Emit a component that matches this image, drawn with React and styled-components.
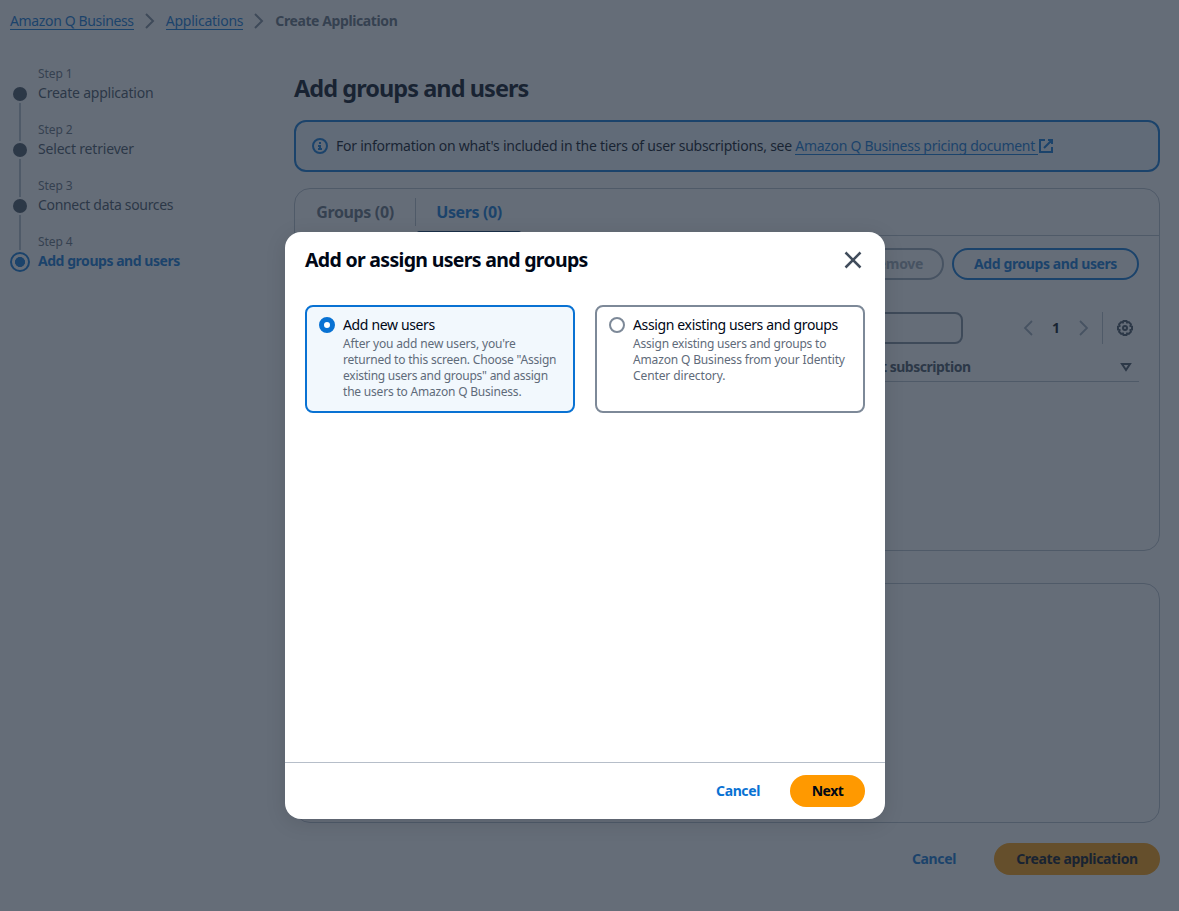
import React from "react";
import styled, { createGlobalStyle } from "styled-components";

const Global = createGlobalStyle`
  * { box-sizing: border-box; }
  html, body { margin: 0; padding: 0; }
  body {
    font-family: "Noto Sans", "Open Sans", sans-serif;
    font-size: 14px;
    line-height: 20px;
    color: #000716;
    background: #fff;
    overflow: hidden;
  }
  h1, h2, p, ol { margin: 0; padding: 0; }
`;

const T = styled.span`
  white-space: nowrap;
  letter-spacing: ${(p) => p.$ls || 0}px;
`;

const Page = styled.div`
  height: 911px;
  width: 1179px;
  display: flex;
  flex-direction: column;
`;

const Breadcrumbs = styled.nav`
  display: flex;
  align-items: center;
  gap: 8px;
  height: 42px;
  padding-left: 10px;
  color: #5f6b7a;
  font-weight: 700;
`;

const Link = styled.a`
  color: #0972d3;
  font-weight: 400;
  white-space: nowrap;
  line-height: 16px;
  border-bottom: 1px solid #0972d3;
  letter-spacing: ${(p) => p.$ls || 0}px;
`;

const Icon = styled.svg`
  width: ${(p) => p.$size || 16}px;
  height: ${(p) => p.$size || 16}px;
  flex: none;
  fill: none;
  stroke: ${(p) => p.$color || "currentColor"};
  stroke-width: ${(p) => p.$weight || 2};
`;

const Body = styled.div`
  display: flex;
  flex: 1;
`;

const Steps = styled.ol`
  width: 294px;
  padding: 24px 0 0 10px;
  list-style: none;
`;

const Step = styled.li`
  display: flex;
  gap: 8px;
  height: 56px;
`;

const Rail = styled.div`
  width: 20px;
  display: flex;
  flex-direction: column;
  align-items: center;
  padding-top: 21px;
`;

const Dot = styled.i`
  flex: none;
  width: 14px;
  height: 14px;
  border-radius: 50%;
  background: #414d5c;
`;

const ActiveDot = styled.i`
  flex: none;
  width: 20px;
  height: 20px;
  margin-top: -3px;
  border-radius: 50%;
  border: 2px solid #0972d3;
  background: radial-gradient(circle, #0972d3 4.7px, transparent 5.3px);
`;

const Connector = styled.i`
  flex: none;
  width: 2px;
  height: ${(p) => (p.$short ? 35 : 38)}px;
  margin-top: 2px;
  background: #b6bec9;
`;

const StepText = styled.div`
  display: flex;
  flex-direction: column;
  color: ${(p) => (p.$active ? "#0972d3" : "#414d5c")};
  font-weight: ${(p) => (p.$active ? 700 : 400)};
`;

const StepNumber = styled.small`
  font-size: 12px;
  line-height: 16px;
  margin-bottom: 1px;
  color: #5f6b7a;
  font-weight: 400;
  letter-spacing: ${(p) => p.$ls || 0}px;
`;

const Main = styled.main`
  width: 866px;
  padding-top: 32px;
`;

const Title = styled.h1`
  font-size: 23.5px;
  line-height: 29px;
  font-weight: 700;
  letter-spacing: -0.95px;
  margin-bottom: 17px;
`;

const Alert = styled.section`
  height: 52px;
  border: 2px solid #0972d3;
  border-radius: 12px;
  background: #f2f8fd;
  display: flex;
  align-items: center;
  padding-left: 16px;
  gap: 8px;
  margin-bottom: 16px;
`;

const AlertText = styled.div`
  display: flex;
  align-items: center;
`;

const Card = styled.section`
  height: ${(p) => p.$height}px;
  border: 1px solid #b6bec9;
  border-radius: 16px;
`;

const LowerCard = styled(Card)`
  margin: 32px 0 20px;
`;

const Tabs = styled.div`
  display: flex;
  height: 47px;
  border-bottom: 1px solid #b6bec9;
`;

const Tab = styled.div`
  display: flex;
  flex-direction: column;
  align-items: center;
  justify-content: space-between;
  font-size: 16px;
  font-weight: 700;
  line-height: 22px;
  padding-top: 12px;
  width: ${(p) => p.$width}px;
  color: ${(p) => (p.$active ? "#0972d3" : "#5f6b7a")};
`;

const TabBar = styled.i`
  width: 104px;
  height: 4px;
  border-radius: 4px;
  background: #033160;
`;

const TabDivider = styled.i`
  width: 1px;
  height: 28px;
  margin-top: 9px;
  background: #b6bec9;
`;

const Toolbar = styled.div`
  display: flex;
  justify-content: flex-end;
  gap: 8px;
  padding: 12px 20px 0;
`;

const variants = {
  outline: "border: 2px solid #0972d3; color: #0972d3;",
  disabled: "border: 2px solid #9ba7b6; color: #9ba7b6;",
  link: "color: #0972d3;",
  primary: "background: #ff9900; color: #000716;",
};

const Button = styled.button`
  height: 32px;
  width: ${(p) => p.$width}px;
  padding: 0;
  border: 0;
  border-radius: 16px;
  background: transparent;
  font: 700 14px/20px "Noto Sans", "Open Sans", sans-serif;
  white-space: nowrap;
  letter-spacing: ${(p) => p.$ls || 0}px;
  ${(p) => variants[p.$variant]}
`;

const Filters = styled.div`
  display: flex;
  align-items: center;
  padding: 32px 20px 0;
`;

const Search = styled.div`
  width: 648px;
  height: 32px;
  border: 2px solid #7d8998;
  border-radius: 8px;
`;

const Pager = styled.div`
  display: flex;
  align-items: center;
  justify-content: space-between;
  width: 72px;
  margin: 0 10px 0 auto;
  font-weight: 700;
`;

const Preferences = styled.div`
  height: 32px;
  width: 37px;
  padding-left: 14px;
  border-left: 1px solid #b6bec9;
  display: flex;
  align-items: center;
  color: #414d5c;
`;

const TableHead = styled.div`
  display: flex;
  align-items: center;
  justify-content: space-between;
  height: 30px;
  margin: 8px 20px 0;
  padding: 0 5px 0 521px;
  border-bottom: 1px solid #b6bec9;
  color: #414d5c;
  font-weight: 700;
`;

const Actions = styled.div`
  display: flex;
  justify-content: flex-end;
  gap: ${(p) => p.$gap}px;
`;

const Backdrop = styled.div`
  position: absolute;
  inset: 0;
  width: 1179px;
  height: 911px;
  background: rgba(35, 47, 62, 0.7);
  display: flex;
  padding: 232px 0 0 285px;
`;

const Dialog = styled.div`
  width: 600px;
  height: 587px;
  border-radius: 16px;
  background: #fff;
  box-shadow: 0 4px 20px 1px rgba(0, 7, 22, 0.1);
  display: flex;
  flex-direction: column;
`;

const DialogHead = styled.header`
  display: flex;
  justify-content: space-between;
  align-items: center;
  padding: 16px 22px 0 20px;
  height: 40px;
  color: #414d5c;
`;

const DialogTitle = styled.h2`
  color: #000716;
  font-size: 19.5px;
  line-height: 24px;
  font-weight: 700;
  letter-spacing: -0.69px;
  white-space: nowrap;
`;

const Tiles = styled.div`
  flex: 1;
  display: flex;
  align-items: flex-start;
  gap: 20px;
  padding: 33px 20px 0;
`;

const Tile = styled.div`
  width: 270px;
  height: 108px;
  border: 2px solid ${(p) => (p.$selected ? "#0972d3" : "#7d8998")};
  border-radius: 8px;
  background: ${(p) => (p.$selected ? "#f2f8fd" : "#fff")};
  padding: 8px 0 0 12px;
  display: flex;
  gap: 8px;
`;

const Radio = styled.i`
  flex: none;
  width: 16px;
  height: 16px;
  margin-top: 2px;
  border-radius: 50%;
  background: #fff;
  border: ${(p) => (p.$selected ? "5px solid #0972d3" : "2px solid #7d8998")};
`;

const TileText = styled.div`
  display: flex;
  flex-direction: column;
`;

const TileName = styled(T)`
  margin-bottom: 1px;
`;

const TileLine = styled.span`
  font-size: 12px;
  line-height: 16px;
  color: #5f6b7a;
  white-space: nowrap;
  letter-spacing: ${(p) => p.$ls || 0}px;
`;

const DialogFoot = styled.footer`
  height: 57px;
  border-top: 1px solid #b6bec9;
  padding: 12px 20px 0;
`;

const Chevron = ({ left, color, weight }) => (
  <Icon viewBox="0 0 16 16" $color={color} $weight={weight}>
    <path d={left ? "M12 1 5 8l7 7" : "m4 1 7 7-7 7"} />
  </Icon>
);

const steps = [
  ["Step 1", "Create application", -0.22],
  ["Step 2", "Select retriever", -0.18],
  ["Step 3", "Connect data sources", -0.32],
  ["Step 4", "Add groups and users", -0.46],
];

const tiles = [
  {
    title: "Add new users",
    ls: -0.35,
    selected: true,
    lines: [
      ["After you add new users, you're", -0.16],
      ["returned to this screen. Choose \"Assign", -0.2],
      ["existing users and groups\" and assign", -0.25],
      ["the users to Amazon Q Business.", -0.2],
    ],
  },
  {
    title: "Assign existing users and groups",
    ls: -0.36,
    lines: [
      ["Assign existing users and groups to", -0.2],
      ["Amazon Q Business from your Identity", -0.15],
      ["Center directory.", -0.1],
    ],
  },
];

export default function App() {
  return (
    <>
      <Global />
      <Page>
        <Breadcrumbs>
          <Link $ls={-0.36}>Amazon Q Business</Link>
          <Chevron color="#7d8998" />
          <Link $ls={-0.24}>Applications</Link>
          <Chevron color="#7d8998" />
          <T $ls={-0.4}>Create Application</T>
        </Breadcrumbs>
        <Body>
          <Steps>
            {steps.map(([n, name, ls], i) => (
              <Step key={n}>
                <Rail>
                  {i === 3 ? <ActiveDot /> : <Dot />}
                  {i < 3 && <Connector $short={i === 2} />}
                </Rail>
                <StepText $active={i === 3}>
                  <StepNumber $ls={-0.1}>{n}</StepNumber>
                  <T $ls={ls}>{name}</T>
                </StepText>
              </Step>
            ))}
          </Steps>
          <Main>
            <Title>Add groups and users</Title>
            <Alert>
              <Icon viewBox="0 0 16 16" $color="#0972d3">
                <circle cx="8" cy="8" r="7" />
                <path d="M8 11V8H6M6 11h4M8 6V4" />
              </Icon>
              <AlertText>
                <T $ls={-0.255}>For information on what's included in the tiers of user subscriptions, see&nbsp;</T>
                <Link $ls={-0.3}>Amazon Q Business pricing document&nbsp;</Link>
                <Icon viewBox="0 0 16 16" $color="#0972d3">
                  <path d="M10 2h4v4M6 10l8-8M14 9v5H2V2h5" />
                </Icon>
              </AlertText>
            </Alert>
            <Card $height={363}>
              <Tabs>
                <Tab $width={120}><T $ls={-0.35}>Groups (0)</T></Tab>
                <TabDivider />
                <Tab $width={106} $active><T $ls={-0.4}>Users (0)</T><TabBar /></Tab>
              </Tabs>
              <Toolbar>
                <Button $variant="disabled" $width={96} $ls={-0.3}>Remove</Button>
                <Button $variant="outline" $width={187} $ls={-0.4}>Add groups and users</Button>
              </Toolbar>
              <Filters>
                <Search />
                <Pager>
                  <Chevron left color="#9ba7b6" weight={1.8} />
                  <T>1</T>
                  <Chevron color="#9ba7b6" weight={1.8} />
                </Pager>
                <Preferences>
                  <Icon viewBox="0 0 16 16">
                    <path d="M6.5 1h3l.6 1.600 1.700-.5 2.100 2.100-.5 1.700L15 6.500v3l-1.600.6.5 1.700-2.100 2.100-1.700-.5L9.500 15h-3l-.6-1.600-1.700.5-2.100-2.100.5-1.700L1 9.500v-3l1.600-.6-.5-1.700 2.100-2.100 1.700.5z" />
                    <circle cx="8" cy="8" r="2" />
                  </Icon>
                </Preferences>
              </Filters>
              <TableHead>
                <T $ls={-0.48}>Current subscription</T>
                <Icon viewBox="0 0 16 16"><path d="M4 5h8l-4 6z" /></Icon>
              </TableHead>
            </Card>
            <LowerCard $height={240} />
            <Actions $gap={22}>
              <Button $variant="link" $width={76} $ls={-0.35}>Cancel</Button>
              <Button $variant="primary" $width={166} $ls={-0.35}>Create application</Button>
            </Actions>
          </Main>
        </Body>
      </Page>
      <Backdrop>
        <Dialog>
          <DialogHead>
            <DialogTitle>Add or assign users and groups</DialogTitle>
            <Icon viewBox="0 0 16 16" $size={20}><path d="m2 2 12 12M14 2 2 14" /></Icon>
          </DialogHead>
          <Tiles>
            {tiles.map((t) => (
              <Tile key={t.title} $selected={t.selected}>
                <Radio $selected={t.selected} />
                <TileText>
                  <TileName $ls={t.ls}>{t.title}</TileName>
                  {t.lines.map(([text, ls]) => <TileLine key={text} $ls={ls}>{text}</TileLine>)}
                </TileText>
              </Tile>
            ))}
          </Tiles>
          <DialogFoot>
            <Actions $gap={8}>
              <Button $variant="link" $width={88} $ls={-0.4}>Cancel</Button>
              <Button $variant="primary" $width={75} $ls={-0.5}>Next</Button>
            </Actions>
          </DialogFoot>
        </Dialog>
      </Backdrop>
    </>
  );
}
